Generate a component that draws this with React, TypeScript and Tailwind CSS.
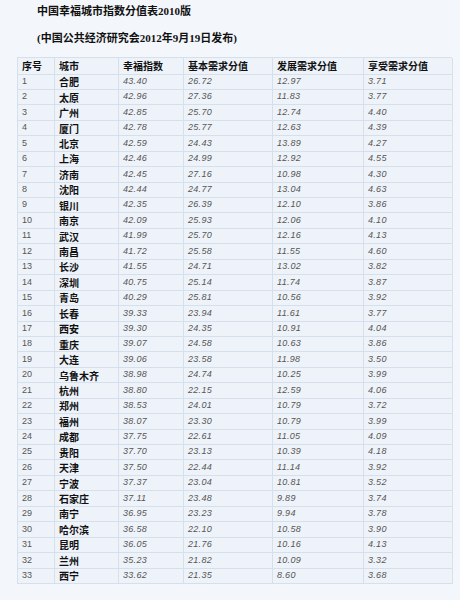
import React from "react";

const rows: [string, string, string, string, string, string][] = [
  ["1", "合肥", "43.40", "26.72", "12.97", "3.71"],
  ["2", "太原", "42.96", "27.36", "11.83", "3.77"],
  ["3", "广州", "42.85", "25.70", "12.74", "4.40"],
  ["4", "厦门", "42.78", "25.77", "12.63", "4.39"],
  ["5", "北京", "42.59", "24.43", "13.89", "4.27"],
  ["6", "上海", "42.46", "24.99", "12.92", "4.55"],
  ["7", "济南", "42.45", "27.16", "10.98", "4.30"],
  ["8", "沈阳", "42.44", "24.77", "13.04", "4.63"],
  ["9", "银川", "42.35", "26.39", "12.10", "3.86"],
  ["10", "南京", "42.09", "25.93", "12.06", "4.10"],
  ["11", "武汉", "41.99", "25.70", "12.16", "4.13"],
  ["12", "南昌", "41.72", "25.58", "11.55", "4.60"],
  ["13", "长沙", "41.55", "24.71", "13.02", "3.82"],
  ["14", "深圳", "40.75", "25.14", "11.74", "3.87"],
  ["15", "青岛", "40.29", "25.81", "10.56", "3.92"],
  ["16", "长春", "39.33", "23.94", "11.61", "3.77"],
  ["17", "西安", "39.30", "24.35", "10.91", "4.04"],
  ["18", "重庆", "39.07", "24.58", "10.63", "3.86"],
  ["19", "大连", "39.06", "23.58", "11.98", "3.50"],
  ["20", "乌鲁木齐", "38.98", "24.74", "10.25", "3.99"],
  ["21", "杭州", "38.80", "22.15", "12.59", "4.06"],
  ["22", "郑州", "38.53", "24.01", "10.79", "3.72"],
  ["23", "福州", "38.07", "23.30", "10.79", "3.99"],
  ["24", "成都", "37.75", "22.61", "11.05", "4.09"],
  ["25", "贵阳", "37.70", "23.13", "10.39", "4.18"],
  ["26", "天津", "37.50", "22.44", "11.14", "3.92"],
  ["27", "宁波", "37.37", "23.04", "10.81", "3.52"],
  ["28", "石家庄", "37.11", "23.48", "9.89", "3.74"],
  ["29", "南宁", "36.95", "23.23", "9.94", "3.78"],
  ["30", "哈尔滨", "36.58", "22.10", "10.58", "3.90"],
  ["31", "昆明", "36.05", "21.76", "10.16", "4.13"],
  ["32", "兰州", "35.23", "21.82", "10.09", "3.32"],
  ["33", "西宁", "33.62", "21.35", "8.60", "3.68"],
];

const headers = ["序号", "城市", "幸福指数", "基本需求分值", "发展需求分值", "享受需求分值"];

const gridCols = "grid grid-cols-[37px_64px_65px_89px_91px_89px]";
const cell = "border-r border-b border-[#d6e0ec] bg-[#eef3fa] pl-[4px] flex items-center overflow-hidden whitespace-nowrap";

export default function App() {
  return (
    <div className="w-[460px] h-[600px] bg-[#f3f6fb] overflow-hidden pt-[4px] font-['Liberation_Serif','Noto_Sans_CJK_SC',serif]">
      <div className="pl-[37px] h-[15px] leading-[15px] text-[11px] font-bold text-[#111]">
        中国幸福城市指数分值表2010版
      </div>
      <div className="pl-[37px] mt-[12px] h-[15px] leading-[15px] text-[11px] font-bold text-[#111]">
        (中国公共经济研究会2012年9月19日发布)
      </div>
      <div className="ml-[17px] mt-[11px] w-[435px] border-t border-l border-[#d6e0ec]">
        <div className={`${gridCols} h-[16.5px]`}>
          {headers.map((h) => (
            <div
              key={h}
              className={`${cell} text-[10px] font-bold text-[#111] font-['Noto_Sans_CJK_SC',sans-serif]`}
            >
              {h}
            </div>
          ))}
        </div>
        {rows.map((r) => (
          <div key={r[0]} className={`${gridCols} h-[15.45px]`}>
            <div className={`${cell} text-[9px] text-[#555] font-['Liberation_Sans',sans-serif]`}>{r[0]}</div>
            <div className={`${cell} text-[10px] font-bold text-[#111] font-['Noto_Sans_CJK_SC',sans-serif]`}>
              {r[1]}
            </div>
            {r.slice(2).map((v, i) => (
              <div
                key={i}
                className={`${cell} text-[9px] italic text-[#555] tracking-[0.3px] font-['Liberation_Sans',sans-serif]`}
              >
                {v}
              </div>
            ))}
          </div>
        ))}
      </div>
    </div>
  );
}
